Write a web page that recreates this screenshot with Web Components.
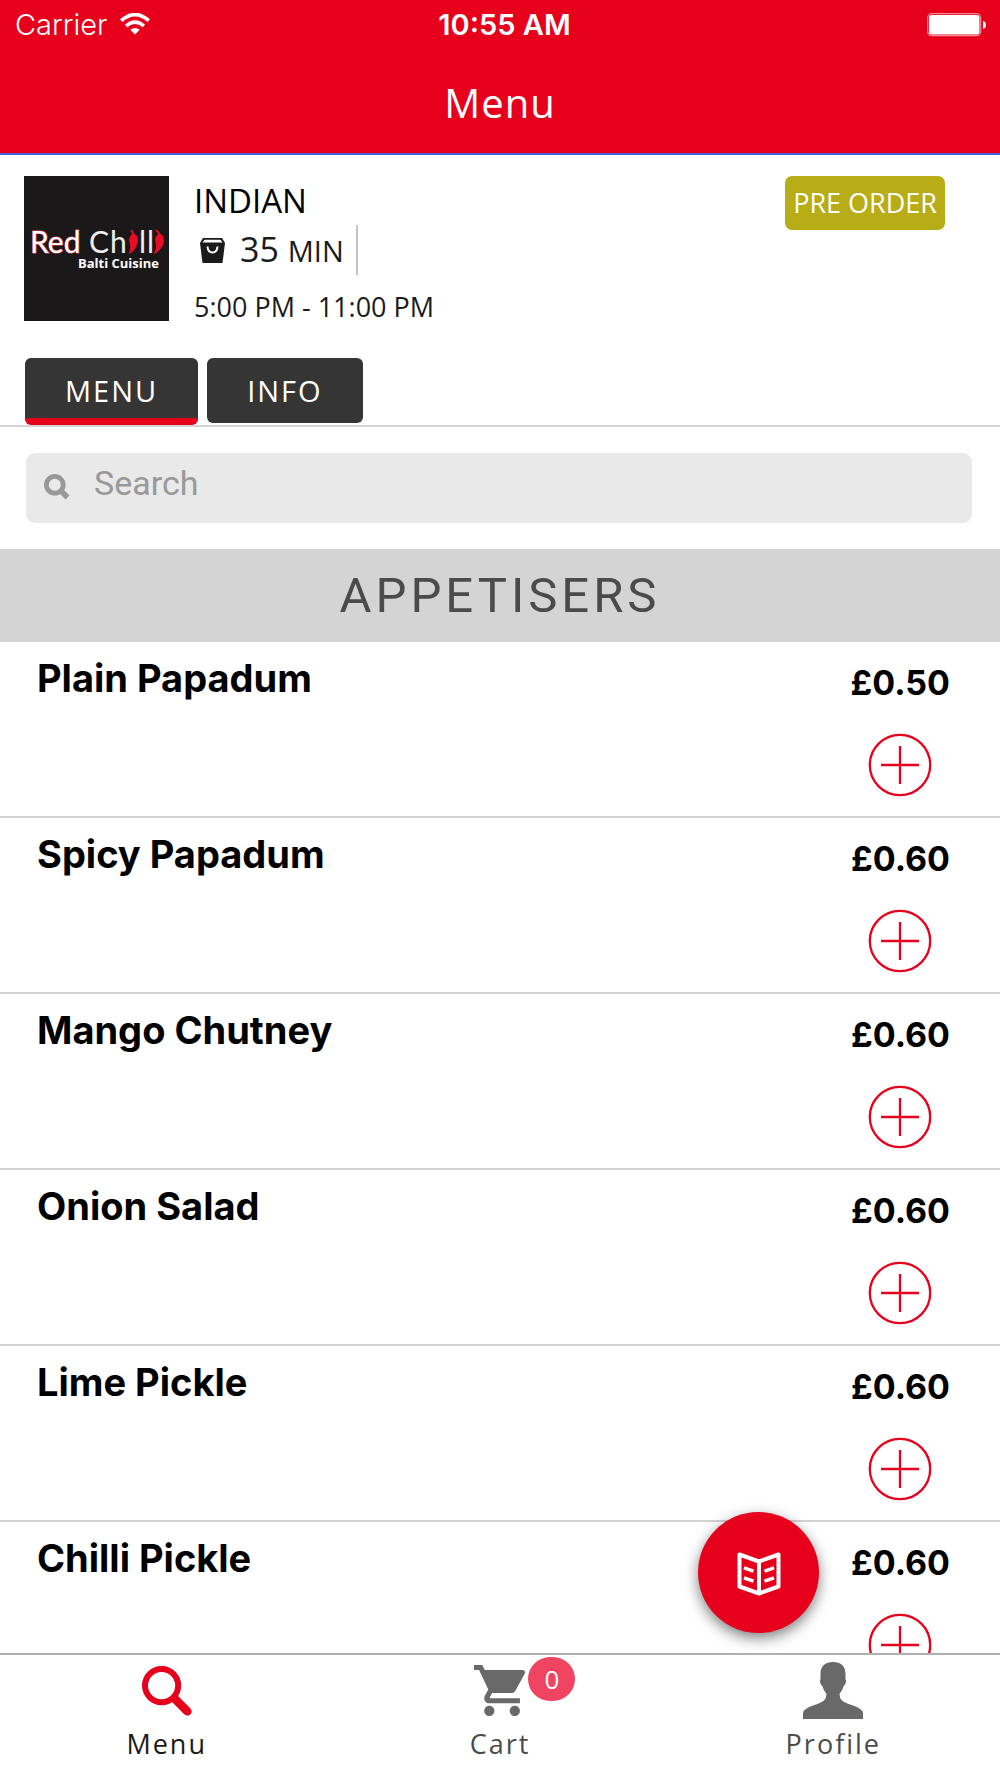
<!DOCTYPE html>
<html lang="en">
<head>
<meta charset="utf-8">
<meta name="viewport" content="width=device-width, initial-scale=1">
<title>Menu</title>
<style>
  html, body { height: 100%; margin: 0; }
  body { background: #fff; color: #000; font-family: "Open Sans", "Noto Sans", sans-serif; }
</style>
</head>
<body>
<menu-app></menu-app>
<script>
const define = (name, html, setup) => {
  const template = document.createElement('template');
  template.innerHTML = `<style>*{box-sizing:border-box}button{font:inherit;border:0;margin:0;padding:0;cursor:pointer}svg{display:block;flex:none}</style>${html}`;
  customElements.define(name, class extends HTMLElement {
    constructor() {
      super();
      this.attachShadow({ mode: 'open' }).append(template.content.cloneNode(true));
    }
    connectedCallback() { if (setup) setup(this, this.shadowRoot); }
  });
};

define('status-bar', `
<style>
  :host { display: grid; grid-template-columns: 1fr auto 1fr; align-items: center; height: 50px; padding: 0 13px 0 15px; color: #fff; font: 400 29px/34px Inter, sans-serif; }
  .left { display: flex; align-items: center; gap: 13px; font-weight: 300; }
  .time { font-weight: 600; padding-left: 7px; }
  .battery { justify-self: end; }
</style>
<div class="left"><span>Carrier</span>
  <svg width="30" height="24" viewBox="0 0 30 24" fill="none" stroke="#fff" stroke-width="3.6"><path d="M1.2 7.6Q15-4.5 28.8 7.6"/><path d="M6.1 13Q15 5.4 23.9 13"/><path d="M10.3 16.8Q15 13.2 19.7 16.8L15 21.6Z" fill="#fff" stroke="none"/></svg>
</div>
<span class="time">10:55 AM</span>
<svg class="battery" width="60" height="24" viewBox="0 0 60 24"><rect x=".7" y=".7" width="53" height="22" rx="4" fill="none" stroke="#fff" stroke-opacity=".55" stroke-width="1.2"/><rect x="2" y="2" width="50.500" height="19.500" rx="2.500" fill="#fff"/><path d="M56 8Q59 8.500 59 12T56 16Z" fill="#fff"/></svg>`);

define('app-header', `
<style>
  :host { display: block; background: #e7001b; border-bottom: 2px solid #4163dc; }
  h1 { margin: 0; height: 103px; padding-top: 25px; color: #fff; font-size: 40px; line-height: 56px; font-weight: 400; text-align: center; letter-spacing: 1px; }
</style>
<status-bar></status-bar><h1><slot></slot></h1>`);

define('restaurant-logo', `
<style>:host { display: block; flex: none; }</style>
<svg width="145" height="145" viewBox="0 0 145 145" role="img" aria-label="Red Chilli Balti Cuisine">
  <rect width="145" height="145" fill="#1b1819"/>
  <text font-family="Lato, sans-serif" font-size="30" fill="#fff"><tspan x="6" y="77" stroke="#e8485a" stroke-width="1.200" paint-order="stroke">Red</tspan> <tspan x="65 86 106 115 123 132" y="77" fill="#eee">Chilli</tspan> <tspan x="54" y="92" font-family="Open Sans, sans-serif" font-size="13" font-weight="700">Balti Cuisine</tspan></text>
  <g fill="#1b1819"><rect x="103" y="50" width="12" height="28"/><rect x="130" y="50" width="14" height="28"/></g>
  <g fill="#ee0a25" stroke="#ee0a25">
    <path d="M107 60Q110 56 112.500 60Q115 65 111.500 71Q109 76 105.500 77.500Q108 72 106 66Q105 62 107 60Z"/>
    <path d="M109 59Q109 56 107 54" fill="none" stroke-width="1.800"/>
    <path d="M133 60Q136 56 138.500 60Q141 65 137.500 71Q134 76 130.500 77.500Q134 72 132 66Q131 62 133 60Z"/>
    <path d="M135 59Q135 56 132 54" fill="none" stroke-width="1.800"/>
  </g>
</svg>`);

define('restaurant-card', `
<style>
  :host { display: flex; align-items: flex-start; gap: 25px; padding: 21px 55px 0 24px; }
  .details { flex: 1; display: flex; flex-direction: column; padding-top: 1px; color: #1b1b1b; }
  .cuisine { font-size: 33px; line-height: 48px; color: #000; }
  .wait { display: flex; align-items: center; align-self: flex-start; height: 50px; gap: 15px; padding: 0 12px 0 6px; border-right: 2px solid #c4c4c4; }
  .wait b { font-weight: 400; font-size: 34px; line-height: 50px; }
  .wait small { font-size: 29px; }
  .hours { font-size: 27px; line-height: 36px; padding-top: 14px; }
  .pre { flex: none; height: 54px; padding: 0 8px; border-radius: 7px; background: #b8ac17; color: #fff; font-size: 27px; line-height: 36px; }
</style>
<restaurant-logo></restaurant-logo>
<div class="details">
  <span class="cuisine">INDIAN</span>
  <div class="wait">
    <svg width="25" height="25" viewBox="0 0 25 25"><path d="M3 0H22L25 5L22.500 25H2.500L0 5Z" fill="#1b1b1b"/><path d="M4.500 1.800H20.500L22.500 4.600H2.500Z" fill="#fff"/><path d="M7.500 8.500Q8 14.500 12.500 14.500T17.500 8.500" fill="none" stroke="#fff" stroke-width="2"/></svg>
    <b>35 <small>MIN</small></b>
  </div>
  <span class="hours">5:00 PM - 11:00 PM</span>
</div>
<button class="pre" type="button">PRE ORDER</button>`);

define('view-tabs', `
<style>
  :host { display: flex; align-items: flex-start; gap: 9px; height: 102px; padding: 33px 0 0 25px; border-bottom: 2px solid #d3d3d3; }
  button { height: 65px; padding: 0 40px; border-radius: 6px; background: #353535; color: #fff; font-size: 29px; letter-spacing: 2px; }
  button[aria-selected=true] { height: 67px; padding-top: 4px; border-bottom: 7px solid #e7001b; }
</style>
<div role="tablist" style="display:contents">
<button type="button" role="tab" aria-selected="true">MENU</button>
<button type="button" role="tab" aria-selected="false">INFO</button>
</div>`);

define('search-box', `
<style>
  :host { display: block; padding: 26px 28px 26px 26px; }
  label { display: flex; align-items: center; gap: 24px; height: 70px; padding: 0 18px; border-radius: 9px; background: #e9e9e9; }
  input { flex: 1; min-width: 0; border: 0; outline: 0; padding: 0 0 10px; background: none; font: 34px/40px Roboto, sans-serif; color: #333; }
  input::placeholder { color: #999; opacity: 1; }
  svg { margin-bottom: 2px; }
</style>
<label>
  <svg width="26" height="26" viewBox="0 0 26 26" fill="none" stroke="#999"><circle cx="10.800" cy="10.800" r="8.400" stroke-width="4.800"/><path d="M17 17L23.500 23.500" stroke-width="5.600"/></svg>
  <input type="text" placeholder="Search" aria-label="Search">
</label>`);

define('menu-section', `
<style>
  :host { display: block; }
  h2 { margin: 0; background: #d4d4d4; color: #4b4b4b; font: 400 49px/93px Roboto, sans-serif; letter-spacing: 4px; text-align: center; }
</style>
<h2></h2><slot></slot>`, (el, root) => { root.querySelector('h2').textContent = el.getAttribute('heading'); });

define('menu-item', `
<style>
  :host { display: flex; justify-content: space-between; height: 176px; padding: 13px 50px 0 37px; border-bottom: 2px solid #d3d3d3; font-family: Inter, sans-serif; }
  h3 { margin: 0; font-size: 38px; line-height: 46px; font-weight: 700; }
  .buy { display: flex; flex-direction: column; align-items: center; gap: 30px; padding-top: 8px; }
  .price { font-size: 34px; line-height: 40px; font-weight: 700; }
  button { background: none; border-radius: 50%; }
</style>
<h3><slot></slot></h3>
<div class="buy"><span class="price"></span>
<button type="button" aria-label="Add to cart"><svg width="64" height="64" viewBox="0 0 64 64" fill="none" stroke="#e7001b" stroke-width="2.300"><circle cx="32" cy="32" r="30.200"/><path d="M13 32H51M32 13V51"/></svg></button></div>`,
(el, root) => { root.querySelector('.price').textContent = el.getAttribute('price'); });

define('category-button', `
<style>
  :host { display: block; }
  button { display: grid; place-items: center; width: 121px; height: 121px; padding-top: 2px; border-radius: 50%; background: #e7001b; box-shadow: 0 5px 14px rgba(0,0,0,.5); }
</style>
<button type="button" aria-label="Categories"><svg width="44" height="44" viewBox="0 0 44 44" fill="none" stroke="#fff" stroke-width="4" stroke-linejoin="round"><path d="M2.500 2.500L22 9.500L41.500 2.500V34.500L22 41.500L2.500 34.500ZM22 9.500V41.500"/><path d="M7 15.800L16.500 19.200M7 25.800L16.500 29.200M37 15.800L27.500 19.200M37 25.800L27.500 29.200" stroke-width="3.400"/></svg></button>`);

define('nav-item', `
<style>
  :host { flex: 1; display: block; }
  a { display: flex; flex-direction: column; align-items: center; color: #4b4b4b; text-decoration: none; font-size: 27px; line-height: 36px; letter-spacing: 2px; }
  :host([current]) a { color: #1b1b1b; }
  .icon { display: grid; place-items: center; height: 71px; position: relative; }
</style>
<a href="#"><span class="icon"><slot name="icon"></slot></span><span><slot></slot></span></a>`);

define('count-badge', `
<style>
  :host { position: absolute; left: 54px; top: -8px; display: grid; place-items: center; width: 47px; height: 44px; border-radius: 22px; background: #ef4562; color: #fff; font-size: 26px; line-height: 36px; letter-spacing: 0; }
</style><slot></slot>`);

define('bottom-nav', `
<style>
  :host { display: flex; flex: none; height: 125px; border-top: 2px solid #b0b0b0; background: #fff; }
  .cart { position: relative; display: block; }
</style>
<nav style="display:contents" aria-label="Main">
<nav-item current><svg slot="icon" width="50" height="50" viewBox="0 0 50 50" fill="none" stroke="#e7001b"><circle cx="19.600" cy="19.600" r="16.600" stroke-width="6"/><path d="M31.500 31.500L45.500 45.500" stroke-width="8.500"/><path d="M44 44L45.500 45.500" stroke-width="8" stroke-linecap="round"/></svg>Menu</nav-item>
<nav-item><span slot="icon" class="cart"><svg width="51" height="51" viewBox="1 2 20 20" fill="#696969"><path d="M7 18c-1.100 0-1.990.9-1.990 2S5.900 22 7 22s2-.9 2-2-.9-2-2-2zM1 2v2h2l3.600 7.590-1.350 2.450c-.16.280-.25.610-.25.960 0 1.100.9 2 2 2h12v-2H7.420c-.14 0-.25-.11-.25-.25l.03-.12.900-1.630h7.450c.750 0 1.410-.41 1.750-1.030l3.580-6.490A1 1 0 0 0 20 4H5.210l-.94-2H1zm16 16c-1.100 0-1.990.9-1.990 2s.890 2 1.990 2 2-.9 2-2-.9-2-2-2z"/></svg><count-badge>0</count-badge></span>Cart</nav-item>
<nav-item><svg slot="icon" width="60" height="57" viewBox="0 0 60 57" fill="#696969"><path d="M17.500 12C17.500 4 22 0 30 0S42.500 4 42.500 12V17Q43.500 18 42.700 21Q42 23 41 23.500Q39.500 28 36.500 32Q36.500 36 39 38.500Q42 41 50 43.500Q60 47 60 51V57H0V51Q0 47 10 43.500Q18 41 21 38.500Q23.500 36 23.500 32Q20.500 28 19 23.500Q18 23 17.300 21Q16.500 18 17.500 17Z"/></svg>Profile</nav-item>
</nav>`);

define('menu-app', `
<style>
  :host { display: flex; flex-direction: column; height: 100vh; }
  main { position: relative; flex: 1; min-height: 0; overflow: hidden; }
  category-button { position: absolute; right: 181px; bottom: 20px; }
</style>
<app-header>Menu</app-header>
<main>
  <restaurant-card></restaurant-card>
  <view-tabs></view-tabs>
  <search-box></search-box>
  <menu-section heading="APPETISERS">
    <menu-item price="£0.50">Plain Papadum</menu-item>
    <menu-item price="£0.60">Spicy Papadum</menu-item>
    <menu-item price="£0.60">Mango Chutney</menu-item>
    <menu-item price="£0.60">Onion Salad</menu-item>
    <menu-item price="£0.60">Lime Pickle</menu-item>
    <menu-item price="£0.60">Chilli Pickle</menu-item>
  </menu-section>
  <category-button></category-button>
</main>
<bottom-nav></bottom-nav>`);
</script>
</body>
</html>
